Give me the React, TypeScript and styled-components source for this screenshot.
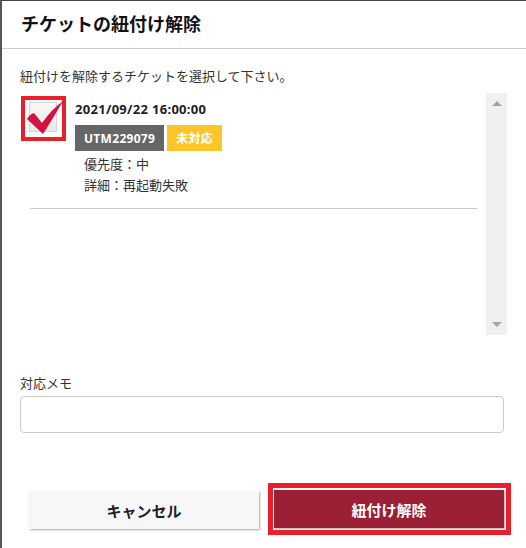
import React from 'react';
import styled, { createGlobalStyle } from 'styled-components';

const GlobalStyle = createGlobalStyle`
    html, body {
        margin: 0;
        padding: 0;
        background: #ffffff;
    }
    body {
        font-family: 'Noto Sans CJK JP', 'Noto Sans', sans-serif;
        color: #222222;
    }
`;

const Modal = styled.div`
    box-sizing: border-box;
    width: 526px;
    height: 548px;
    display: flex;
    flex-direction: column;
    background: #ffffff;
    border-top: 1px solid #444444;
    border-left: 2px solid #555555;
`;

const Header = styled.div`
    height: 47px;
    display: flex;
    align-items: center;
    padding: 0 19px;
    border-bottom: 1px solid #cccccc;
`;

const Title = styled.h1`
    margin: 0;
    font-size: 18px;
    font-weight: 700;
    color: #111111;
    line-height: 1;
    margin-top: -3px;
`;

const Body = styled.div`
    display: flex;
    flex-direction: column;
    padding: 18px 19px 0 18px;
`;

const Text = styled.p`
    margin: 0;
    font-size: 13px;
    line-height: 18px;
    color: #333333;
`;

const ListBox = styled.div`
    margin-top: 8px;
    height: 242px;
    display: flex;
`;

const ListContent = styled.div`
    flex: 1;
    padding: 3px 9px 0 1px;
`;

const Scrollbar = styled.div`
    width: 21px;
    background: #f0f0f0;
    display: flex;
    flex-direction: column;
    justify-content: space-between;
    align-items: center;
    padding: 8px 0;
    box-sizing: border-box;
`;

const Arrow = styled.div<{ $down?: boolean }>`
    width: 0;
    height: 0;
    border-left: 5px solid transparent;
    border-right: 5px solid transparent;
    ${({ $down }) => ($down ? 'border-top: 5px solid #a3a3a3;' : 'border-bottom: 5px solid #a3a3a3;')}
`;

const Item = styled.div`
    display: flex;
    gap: 9px;
    padding-bottom: 14px;
`;

const CheckFrame = styled.div`
    position: relative;
    box-sizing: border-box;
    width: 45px;
    height: 45px;
    border: 4px solid #e8202a;
    background: #ffffff;
    flex-shrink: 0;
`;

const CheckBox = styled.div`
    position: absolute;
    left: 4px;
    top: 2px;
    width: 28px;
    height: 30px;
    box-sizing: border-box;
    border: 1px solid #d4d4d4;
    background: linear-gradient(#f8f8f8, #e8e8e8);
`;

const CheckMark = styled.svg`
    position: absolute;
    left: -4px;
    top: -4px;
`;

const ItemInfo = styled.div`
    display: flex;
    flex-direction: column;
    padding-top: 5px;
`;

const DateText = styled.div`
    font-size: 13px;
    font-weight: 700;
    line-height: 16px;
    letter-spacing: 0.3px;
    color: #222222;
    font-family: 'Noto Sans', 'Noto Sans CJK JP', sans-serif;
`;

const Badges = styled.div`
    display: flex;
    gap: 3px;
    margin-top: 8px;
`;

const Badge = styled.span<{ $color: string }>`
    height: 26px;
    display: flex;
    align-items: center;
    padding: 0 9px;
    background: ${({ $color }) => $color};
    color: #ffffff;
    font-size: 12px;
    font-weight: 700;
    letter-spacing: 0.3px;
    font-family: 'Noto Sans', 'Noto Sans CJK JP', sans-serif;
`;

const Details = styled.div`
    display: flex;
    flex-direction: column;
    padding-left: 9px;
    margin-top: 4px;
    gap: 3px;
`;

const Divider = styled.div`
    height: 1px;
    background: #cccccc;
    margin-left: 9px;
`;

const MemoLabel = styled(Text)`
    margin-top: 39px;
`;

const MemoInput = styled.input`
    margin-top: 4px;
    width: 484px;
    height: 37px;
    box-sizing: border-box;
    border: 1px solid #cccccc;
    border-radius: 4px;
    outline: none;
`;

const Footer = styled.div`
    display: flex;
    gap: 9px;
    padding: 50px 0 0 27px;
`;

const Button = styled.button`
    width: 230px;
    height: 38px;
    border: none;
    font-family: inherit;
    font-size: 15px;
    font-weight: 700;
`;

const CancelButton = styled(Button)`
    background: #f7f7f7;
    color: #222222;
    box-shadow: 1px 1px 2px rgba(0, 0, 0, 0.35);
    margin-top: 8px;
`;

const Highlight = styled.div`
    border: 5px solid #e8202a;
    padding: 2px 2px 2px 1px;
    background: #ffffff;
`;

const ConfirmButton = styled(Button)`
    display: block;
    background: #9b2035;
    color: #ffffff;
    box-shadow: 1px 1px 2px rgba(0, 0, 0, 0.35);
`;

export default function App() {
    return (
        <>
            <GlobalStyle />
            <Modal>
                <Header>
                    <Title>チケットの紐付け解除</Title>
                </Header>
                <Body>
                    <Text>紐付けを解除するチケットを選択して下さい。</Text>
                    <ListBox>
                        <ListContent>
                            <Item>
                                <CheckFrame>
                                    <CheckBox />
                                    <CheckMark width="45" height="45" viewBox="0 0 45 45">
                                        <path
                                            d="M6 23 Q9 18 13 17 L21 27 Q31 13 42 5 Q34 19 22 38 Z"
                                            fill="#d5123f"
                                        />
                                    </CheckMark>
                                </CheckFrame>
                                <ItemInfo>
                                    <DateText>2021/09/22 16:00:00</DateText>
                                    <Badges>
                                        <Badge $color="#666666">UTM229079</Badge>
                                        <Badge $color="#fcc62b">未対応</Badge>
                                    </Badges>
                                    <Details>
                                        <Text>優先度：中</Text>
                                        <Text>詳細：再起動失敗</Text>
                                    </Details>
                                </ItemInfo>
                            </Item>
                            <Divider />
                        </ListContent>
                        <Scrollbar>
                            <Arrow />
                            <Arrow $down />
                        </Scrollbar>
                    </ListBox>
                    <MemoLabel>対応メモ</MemoLabel>
                    <MemoInput />
                </Body>
                <Footer>
                    <CancelButton>キャンセル</CancelButton>
                    <Highlight>
                        <ConfirmButton>紐付け解除</ConfirmButton>
                    </Highlight>
                </Footer>
            </Modal>
        </>
    );
}
